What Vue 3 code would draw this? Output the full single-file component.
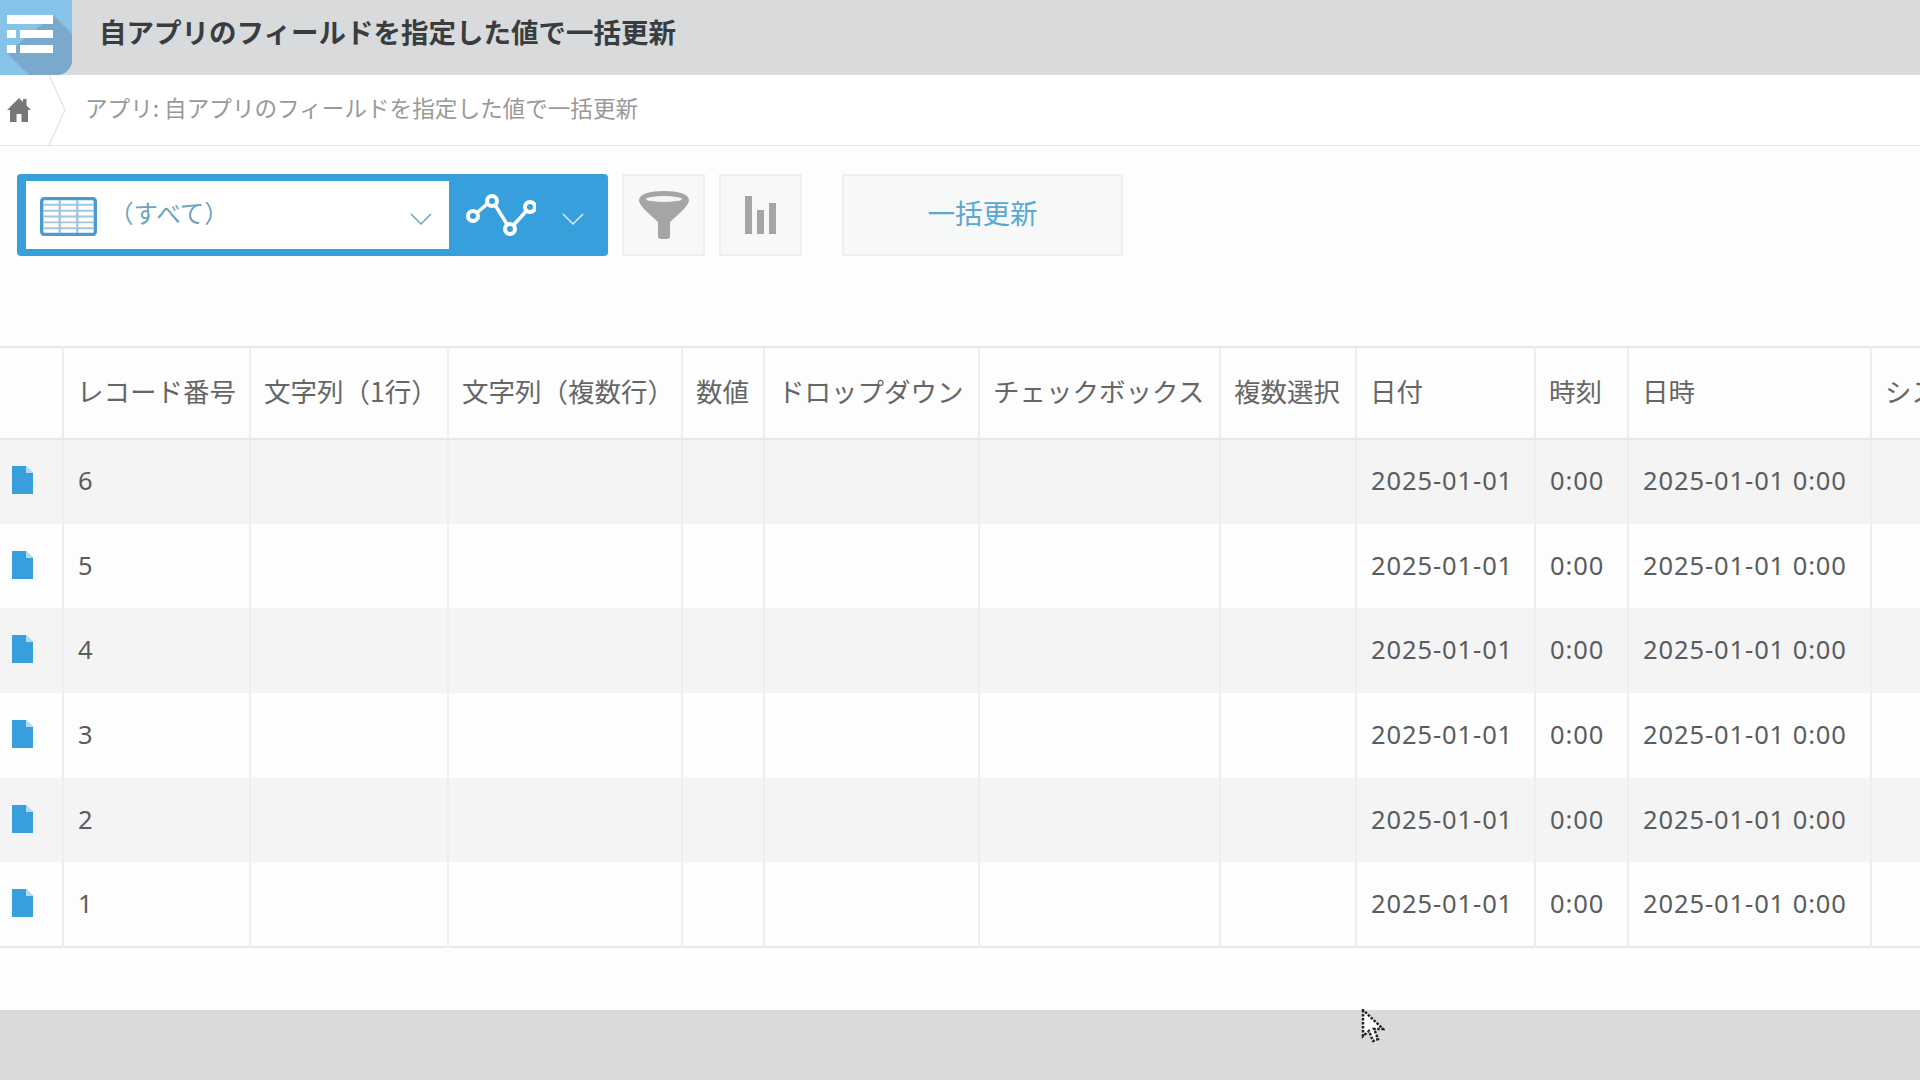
<script setup>
const columns = [
  { label: '', width: 63 },
  { label: 'レコード番号', width: 187 },
  { label: '文字列（1行）', width: 198 },
  { label: '文字列（複数行）', width: 234 },
  { label: '数値', width: 82 },
  { label: 'ドロップダウン', width: 215 },
  { label: 'チェックボックス', width: 241 },
  { label: '複数選択', width: 136 },
  { label: '日付', width: 179 },
  { label: '時刻', width: 93 },
  { label: '日時', width: 243 },
  { label: 'システム', width: 130 },
]
const records = [6, 5, 4, 3, 2, 1]
const tableWidth = columns.reduce((sum, c) => sum + c.width, 0)
const gridLinesY = [6, 12, 18, 24, 30]
</script>

<template>
  <div class="page">
    <header class="app_header">
      <div class="app_logo">
        <svg width="72" height="75" viewBox="0 0 72 75">
          <path d="M0 0H72V60a15 15 0 0 1-15 15H0Z" fill="#87c3e8" />
          <path d="M53 15L72 34V60a15 15 0 0 1-15 15H29L7 53Z" fill="#7ba9cc" />
          <g fill="#fff">
            <rect x="7" y="15" width="46" height="9" />
            <rect x="7" y="30" width="9" height="8" />
            <rect x="20" y="30" width="33" height="8" />
            <rect x="7" y="45" width="9" height="8" />
            <rect x="20" y="45" width="33" height="8" />
          </g>
        </svg>
      </div>
      <h1 class="app_title">自アプリのフィールドを指定した値で一括更新</h1>
    </header>

    <nav class="breadcrumb">
      <svg class="home_icon" width="24" height="26" viewBox="0 0 24 26">
        <path d="M12 1L16 5V2H19.500V8.500L24 13H21V25H14.500V17H9.500V25H3V13H0Z" fill="#777" />
      </svg>
      <svg class="crumb_sep" width="18" height="70" viewBox="0 0 18 70">
        <path d="M1 0L17 35L1 70" fill="none" stroke="#e4e7e8" stroke-width="1.500" />
      </svg>
      <span class="crumb_text">アプリ: 自アプリのフィールドを指定した値で一括更新</span>
    </nav>

    <main class="content">
      <div class="toolbar">
        <div class="view_picker">
          <div class="view_select">
            <svg class="table_icon" width="57" height="39" viewBox="0 0 58 40">
              <rect x="1.500" y="1.500" width="55" height="37" rx="3" fill="#fff" stroke="#4a9bd0" stroke-width="3.500" />
              <path v-for="y in gridLinesY" :key="y" :d="`M3 ${y + 2}H55`" stroke="#a3c6dd" stroke-width="2" />
              <path d="M20 3V37M38 3V37" stroke="#a3c6dd" stroke-width="2.500" />
            </svg>
            <span class="view_name">（すべて）</span>
            <svg class="chevron" width="22" height="12" viewBox="0 0 22 12">
              <path d="M1 1L11 11L21 1" fill="none" stroke="#6da3bf" stroke-width="1.500" />
            </svg>
          </div>
          <div class="graph_part">
            <svg width="70" height="42" viewBox="0 0 70 42">
              <path d="M7 22L26 6L44 35L64 13" fill="none" stroke="#fff" stroke-width="3.500" />
              <g fill="#379fdb" stroke="#fff" stroke-width="4">
                <circle cx="7" cy="22" r="5" />
                <circle cx="26" cy="7" r="5" />
                <circle cx="44" cy="35" r="5" />
                <circle cx="64" cy="13" r="5" />
              </g>
            </svg>
            <svg class="chevron_white" width="22" height="12" viewBox="0 0 22 12">
              <path d="M1 1L11 11L21 1" fill="none" stroke="#d5e9f6" stroke-width="1.500" />
            </svg>
          </div>
        </div>

        <button class="icon_button">
          <svg width="50" height="48" viewBox="0 0 50 48">
            <path d="M0 9C0 3 11 0 25 0S50 3 50 9C50 12 47 16 43 20L31 31V45a3 3 0 0 1-3 3H22a3 3 0 0 1-3-3V31L7 20C3 16 0 12 0 9Z" fill="#a5a5a5" />
            <ellipse cx="25" cy="8" rx="18" ry="3" fill="#f4f5f5" />
          </svg>
        </button>
        <button class="icon_button">
          <div class="bars">
            <span class="bar bar_tall"></span>
            <span class="bar bar_short"></span>
            <span class="bar bar_mid"></span>
          </div>
        </button>
        <button class="update_button">一括更新</button>
      </div>

      <div class="table_wrap">
        <table class="records" :style="{ width: tableWidth + 'px' }">
          <colgroup>
            <col v-for="(c, i) in columns" :key="i" :style="{ width: c.width + 'px' }" />
          </colgroup>
          <thead>
            <tr>
              <th v-for="(c, i) in columns" :key="i">{{ c.label }}</th>
            </tr>
          </thead>
          <tbody>
            <tr v-for="(n, r) in records" :key="n" :class="{ stripe: r % 2 === 0 }">
              <td class="file_cell">
                <svg width="21" height="28" viewBox="0 0 21 28">
                  <path d="M0 0H14L21 7V28H0Z" fill="#379fdb" />
                  <path d="M14 0L21 7H14Z" fill="#b5d9f0" />
                </svg>
              </td>
              <td>{{ n }}</td>
              <td></td>
              <td></td>
              <td></td>
              <td></td>
              <td></td>
              <td></td>
              <td>2025-01-01</td>
              <td>0:00</td>
              <td>2025-01-01 0:00</td>
              <td></td>
            </tr>
          </tbody>
        </table>
      </div>
    </main>

    <footer class="app_footer"></footer>

    <svg class="cursor" width="24" height="34" viewBox="0 0 24 34">
      <path d="M2 1V27L8 22L12 32L17 30L13 20H22Z" fill="#fff" stroke="#222" stroke-width="2.500" stroke-dasharray="2.500 1.500" />
    </svg>
  </div>
</template>

<style>
html, body {
  margin: 0;
  background: #fdfdfd;
}
</style>

<style scoped>
.page {
  position: relative;
  width: 1920px;
  height: 1080px;
  overflow: hidden;
  display: flex;
  flex-direction: column;
  background: #fdfdfd;
  font-family: "Noto Sans CJK JP", "Noto Sans", sans-serif;
}

.app_header {
  height: 75px;
  flex: none;
  display: flex;
  align-items: center;
  background: #d8dadb;
}

.app_logo {
  width: 72px;
  height: 75px;
  line-height: 0;
}

.app_title {
  margin: 0 0 13px 27px;
  font-size: 27.500px;
  font-weight: 700;
  color: #3a3d40;
  white-space: nowrap;
}

.breadcrumb {
  height: 70px;
  flex: none;
  display: flex;
  align-items: center;
  border-bottom: 1px solid #e4e7e8;
  background: #fff;
}

.home_icon {
  margin-left: 7px;
}

.crumb_sep {
  margin-left: 17px;
}

.crumb_text {
  margin: 0 0 5px 19px;
  font-size: 22.600px;
  color: #999;
  white-space: nowrap;
}

.content {
  flex: 1;
  min-height: 0;
  padding-top: 28px;
}

.toolbar {
  display: flex;
  align-items: stretch;
  height: 82px;
  margin-left: 17px;
}

.view_picker {
  width: 591px;
  display: flex;
  box-sizing: border-box;
  padding: 7px 0 7px 9px;
  border-radius: 4px;
  background: #379fdb;
}

.view_select {
  width: 423px;
  display: flex;
  align-items: center;
  background: #fff;
  padding-left: 14px;
  box-sizing: border-box;
}

.table_icon {
  margin-top: 3px;
}

.view_name {
  margin: 0 0 5px 12px;
  font-size: 24.500px;
  color: #6da3bf;
  flex: 1;
}

.chevron {
  margin-right: 17px;
  margin-top: 7px;
}

.graph_part {
  flex: 1;
  display: flex;
  align-items: center;
  padding-left: 17px;
}

.chevron_white {
  margin-left: 26px;
  margin-top: 7px;
}

.icon_button {
  width: 83px;
  margin-left: 14px;
  padding: 0;
  display: flex;
  align-items: center;
  justify-content: center;
  background: #f7f9f9;
  border: 2px solid #eeeff0;
  box-sizing: border-box;
}

.bars {
  height: 38px;
  display: flex;
  align-items: flex-end;
  gap: 5px;
}

.bar {
  width: 7px;
  background: #a5a5a5;
}

.bar_tall {
  height: 38px;
}

.bar_short {
  height: 24px;
}

.bar_mid {
  height: 31px;
}

.update_button {
  width: 281px;
  margin-left: 40px;
  padding: 0 0 6px;
  background: #f7f9f9;
  border: 2px solid #eeeff0;
  box-sizing: border-box;
  font-family: inherit;
  font-size: 27.500px;
  color: #5aa8d4;
}

.table_wrap {
  margin-top: 90px;
  overflow: hidden;
}

.records {
  table-layout: fixed;
  border-collapse: collapse;
  border-top: 2px solid #e6e8e9;
  border-bottom: 2px solid #e6e8e9;
  color: #555;
}

th {
  height: 92px;
  padding: 0 0 5px 13px;
  text-align: left;
  font-size: 26.500px;
  font-weight: 400;
  color: #666;
  white-space: nowrap;
  overflow: hidden;
  border-left: 2px solid #eeeeee;
  border-bottom: 2px solid #e8e8e8;
  box-sizing: border-box;
}

td {
  height: 84.700px;
  padding: 0 0 3px 14px;
  font-family: "Noto Sans", sans-serif;
  font-size: 25.500px;
  letter-spacing: 0.900px;
  color: #5a5d60;
  white-space: nowrap;
  overflow: hidden;
  border-left: 2px solid #eeeeee;
  box-sizing: border-box;
}

th:first-child,
td:first-child {
  border-left: none;
}

.stripe td {
  background: #f4f4f4;
}

.file_cell {
  padding-left: 12px;
  line-height: 0;
}

.app_footer {
  height: 70px;
  flex: none;
  background: #d8dadb;
}

.cursor {
  position: absolute;
  left: 1361px;
  top: 1009px;
}
</style>
